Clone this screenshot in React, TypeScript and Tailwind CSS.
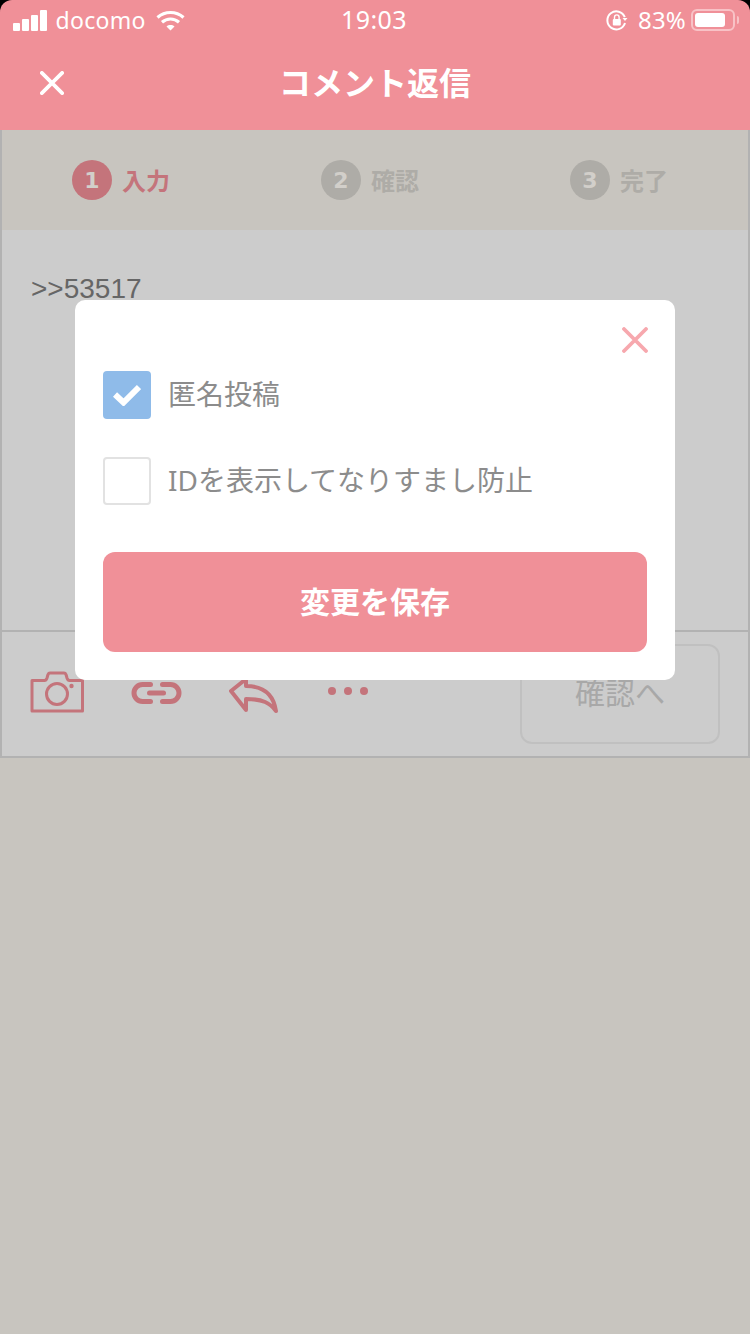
const jp = "font-['Noto_Sans','Noto_Sans_CJK_JP',sans-serif]"

const StatusBar = () => (
  <div className="flex h-[40px] items-center justify-between pl-[13px] pr-[11px] text-[24px] leading-none text-white">
    <div className="flex items-center">
      <div className="flex items-end gap-[2.500px]">
        <span className="h-[8px] w-[6.500px] rounded-[1px] bg-white" />
        <span className="h-[12px] w-[6.500px] rounded-[1px] bg-white" />
        <span className="h-[16px] w-[6.500px] rounded-[1px] bg-white" />
        <span className="h-[21px] w-[6.500px] rounded-[1px] bg-white" />
      </div>
      <span className="ml-[9px] text-[23px] leading-none tracking-[0.3px]">docomo</span>
      <svg className="ml-[10px]" width="29" height="21" viewBox="0 0 29 21" fill="none" stroke="#fff" strokeWidth="3.2">
        <path d="M1.500 7.500C9 .8 20 .8 27.500 7.500" />
        <path d="M6 12.200c5-4.300 12-4.300 17 0" />
        <path d="M10.500 16.500l4 4 4-4c-2.300-1.900-5.700-1.900-8 0z" fill="#fff" stroke="none" />
      </svg>
    </div>
    <span className="absolute left-[341px] top-[7px] text-[25px] leading-[25px] tracking-[0.4px]">19:03</span>
    <div className="flex items-center">
      <svg width="22" height="22" viewBox="0 0 22 22" fill="none">
        <path d="M18.800 8.200A9 9 0 1 0 19 14" stroke="#fff" strokeWidth="2" />
        <path d="M16.500 9h5l-2.500 3z" fill="#fff" />
        <rect x="6.800" y="10" width="8" height="6.500" rx="1" fill="#fff" />
        <path d="M8.500 10V8.200a2.300 2.300 0 0 1 4.600 0V10" stroke="#fff" strokeWidth="1.400" />
      </svg>
      <span className="ml-[10px] text-[24px] tracking-[0.2px]">83%</span>
      <div className="ml-[5px] flex h-[22px] w-[44px] items-center rounded-[6px] border-2 border-[#f8c2c6] p-[2px]">
        <div className="h-[14px] w-[30px] rounded-[3px] bg-white" />
      </div>
      <span className="ml-[2px] h-[8px] w-[2px] rounded-r-sm bg-[#f8c2c6]" />
    </div>
  </div>
)

const Step = ({ n, label, active }: { n: number; label: string; active?: boolean }) => (
  <div className="flex items-center">
    <div className={`flex h-[40px] w-[40px] items-center justify-center rounded-full font-['DejaVu_Sans',sans-serif] text-[22px] font-bold text-[#d2cfca] ${active ? "bg-[#c4747b]" : "bg-[#aeaca7]"}`}>
      {n}
    </div>
    <span className={`ml-[10px] mt-[2px] text-[24px] font-bold leading-none ${active ? "text-[#c4747b]" : "text-[#aeaca7]"}`}>{label}</span>
  </div>
)

const CloseIcon = ({ size, color, width }: { size: number; color: string; width: number }) => (
  <svg width={size} height={size} viewBox="0 0 26 26" fill="none" stroke={color} strokeWidth={width} strokeLinecap="round">
    <path d="M2 2l22 22M24 2L2 24" />
  </svg>
)

const Toolbar = () => (
  <div className="flex h-[128px] items-start border-y-2 border-[#b2b2b2] pl-[28px] pr-[28px]">
    <svg className="mt-[39px]" width="54" height="42" viewBox="0 0 54 42" fill="none" stroke="#c4747b" strokeWidth="3" strokeLinejoin="round">
      <path d="M2 9.500h12.500c1.500 0 2-1 2.500-2.500l1-3.500c.4-1 1-1.500 2-1.500h14c1 0 1.600.5 2 1.500l1 3.500c.5 1.500 1 2.500 2.500 2.500h13v30.500H2z" />
      <circle cx="27" cy="23" r="10.500" />
      <circle cx="41.500" cy="15" r="2.200" fill="#c4747b" stroke="none" />
    </svg>
    <svg className="ml-[47px] mt-[50px]" width="51" height="22" viewBox="0 0 51 22" fill="none" stroke="#c4747b" strokeWidth="5" strokeLinecap="round">
      <path d="M19.500 2.500h-8a8.500 8.500 0 0 0 0 17h8" />
      <path d="M31.500 2.500h8a8.500 8.500 0 0 1 0 17h-8" />
      <path d="M18.500 11h14" />
    </svg>
    <svg className="ml-[47px] mt-[45px]" width="50" height="36" viewBox="0 0 50 36" fill="none" stroke="#c4747b" strokeWidth="4" strokeLinejoin="round" strokeLinecap="round">
      <path d="M2 14L17 2v7c14 0 27 5 30 25-6-8-13-12-30-12v11z" />
    </svg>
    <div className="ml-[49px] mt-[55px] flex gap-[8px]">
      <span className="h-[8px] w-[8px] rounded-full bg-[#c4747b]" />
      <span className="h-[8px] w-[8px] rounded-full bg-[#c4747b]" />
      <span className="h-[8px] w-[8px] rounded-full bg-[#c4747b]" />
    </div>
    <button className="ml-auto mt-[12px] h-[100px] w-[200px] rounded-[12px] border-2 border-[#c0c0c0] pb-[4px] text-center text-[30px] text-[#a8a8a8]">
      確認へ
    </button>
  </div>
)

const Modal = () => (
  <div className="absolute left-[75px] top-[300px] h-[380px] w-[600px] rounded-[10px] bg-white px-[28px] pt-[71px]">
    <div className="absolute right-[27px] top-[27px]">
      <CloseIcon size={26} color="#f7a8ae" width={3.800} />
    </div>
    <div className="flex h-[48px] items-center">
      <div className="flex h-[48px] w-[48px] items-center justify-center rounded-[4px] bg-[#8fbbe9]">
        <svg width="28" height="22" viewBox="0 0 28 22" fill="none" stroke="#fff" strokeWidth="6">
          <path d="M2 10.500l8.500 8L26 3" />
        </svg>
      </div>
      <span className="ml-[17px] pb-[3px] text-[28px] leading-none text-[#8c8c8c]">匿名投稿</span>
    </div>
    <div className="mt-[38px] flex h-[48px] items-center">
      <div className="h-[48px] w-[48px] rounded-[4px] border-2 border-[#e2e2e2]" />
      <span className="ml-[17px] pb-[3px] text-[28px] leading-none text-[#8c8c8c]">IDを表示してなりすまし防止</span>
    </div>
    <button className="mt-[47px] h-[100px] w-[544px] rounded-[12px] bg-[#f09098] pb-[2px] text-[30px] font-bold text-white">
      変更を保存
    </button>
  </div>
)

export default function App() {
  return (
    <div className={`relative h-[1334px] w-[750px] overflow-hidden bg-[#c8c5bf] ${jp}`}>
      <div className="bg-black">
        <div className="h-[130px] rounded-t-[12px] bg-[#f09098]">
          <StatusBar />
          <div className="relative flex h-[90px] items-center justify-center pb-[4px]">
            <div className="absolute left-[40px] top-[31px]">
              <CloseIcon size={24} color="#fff" width={4} />
            </div>
            <span className="text-[32px] font-bold leading-none text-white">コメント返信</span>
          </div>
        </div>
      </div>
      <div className="border-x-2 border-[#b2b2b2]">
        <div className="grid h-[100px] grid-cols-[249px_249px_1fr] items-center pl-[70px]">
          <Step n={1} label="入力" active />
          <Step n={2} label="確認" />
          <Step n={3} label="完了" />
        </div>
        <div className="bg-[#cccccc]">
          <div className="h-[400px] px-[29px] pt-[41px] font-['Liberation_Sans',sans-serif] text-[28px] leading-[36px] text-[#666666]">
            &gt;&gt;53517
          </div>
          <Toolbar />
        </div>
      </div>
      <Modal />
    </div>
  )
}
